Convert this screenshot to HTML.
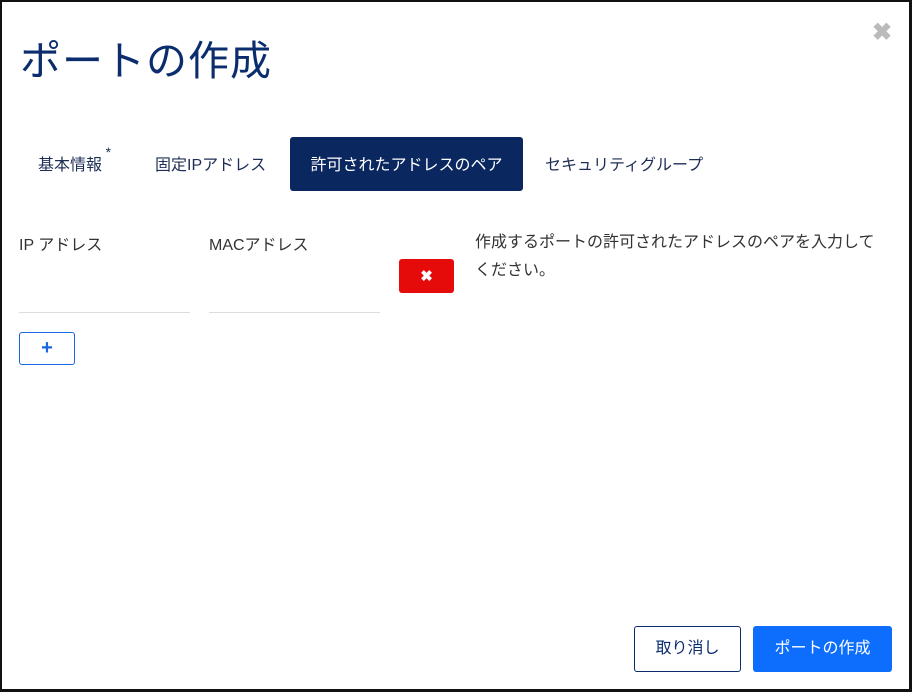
<!DOCTYPE html>
<html><head><meta charset="utf-8"><style>
*{box-sizing:border-box;margin:0;padding:0}
html,body{width:912px;height:692px;overflow:hidden;background:#fff}
body{font-family:"Liberation Sans","Noto Sans CJK JP",sans-serif;position:relative}
.frame{position:absolute;left:0;top:0;width:912px;height:692px;border:2px solid #111;border-right-width:3px;border-bottom-width:3px}
.abs{position:absolute;white-space:nowrap}
h1{position:absolute;left:20px;top:27px;font-size:41px;font-weight:400;color:#0b2d6e;letter-spacing:1px;white-space:nowrap}
.close{position:absolute;left:872px;top:18px;font-size:24px;color:#bbb;font-weight:700}
.tab{position:absolute;top:139px;height:54px;line-height:54px;font-size:16px;color:#1d2d55;white-space:nowrap}
.tab sup{font-size:14px;position:absolute;top:-14px;right:-9px;line-height:54px}
.active{left:290px;top:137px;width:233px;background:#0b2760;color:#fff;border-radius:3px;text-align:center;line-height:58px}
.lbl{font-size:16px;color:#333}
.line{position:absolute;top:312px;height:1px;background:#ddd;width:171px}
.del{position:absolute;left:399px;top:259px;width:55px;height:34px;background:#e50b0b;border-radius:3px;color:#fff;text-align:center;line-height:36px;font-size:15px;font-weight:700}
.add{position:absolute;left:19px;top:332px;width:56px;height:33px;border:1px solid #1a66e0;border-radius:3px;color:#1a66e0;text-align:center;line-height:31px;font-size:20px;font-weight:700}
.help{position:absolute;left:475px;top:229px;width:430px;font-size:16px;color:#333;line-height:28px;white-space:nowrap}
.btn{position:absolute;top:626px;height:46px;line-height:46px;text-align:center;font-size:16px;border-radius:3px}
.cancel{left:634px;width:107px;border:1px solid #0b2d6e;color:#0b2d6e;line-height:44px}
.ok{left:753px;width:139px;background:#0d6efd;color:#fff}
</style></head><body>
<div class="frame"></div>
<h1>ポートの作成</h1>
<div class="close">✖</div>
<div class="tab" style="left:38px">基本情報<sup>*</sup></div>
<div class="tab" style="left:155px">固定IPアドレス</div>
<div class="tab active">許可されたアドレスのペア</div>
<div class="tab" style="left:545px">セキュリティグループ</div>
<div class="abs lbl" style="left:19px;top:231px">IP アドレス</div>
<div class="abs lbl" style="left:209px;top:231px">MACアドレス</div>
<div class="line" style="left:19px"></div>
<div class="line" style="left:209px"></div>
<div class="del">✖</div>
<div class="add">+</div>
<div class="help">作成するポートの許可されたアドレスのペアを入力して<br>ください。</div>
<div class="btn cancel">取り消し</div>
<div class="btn ok">ポートの作成</div>
</body></html>
